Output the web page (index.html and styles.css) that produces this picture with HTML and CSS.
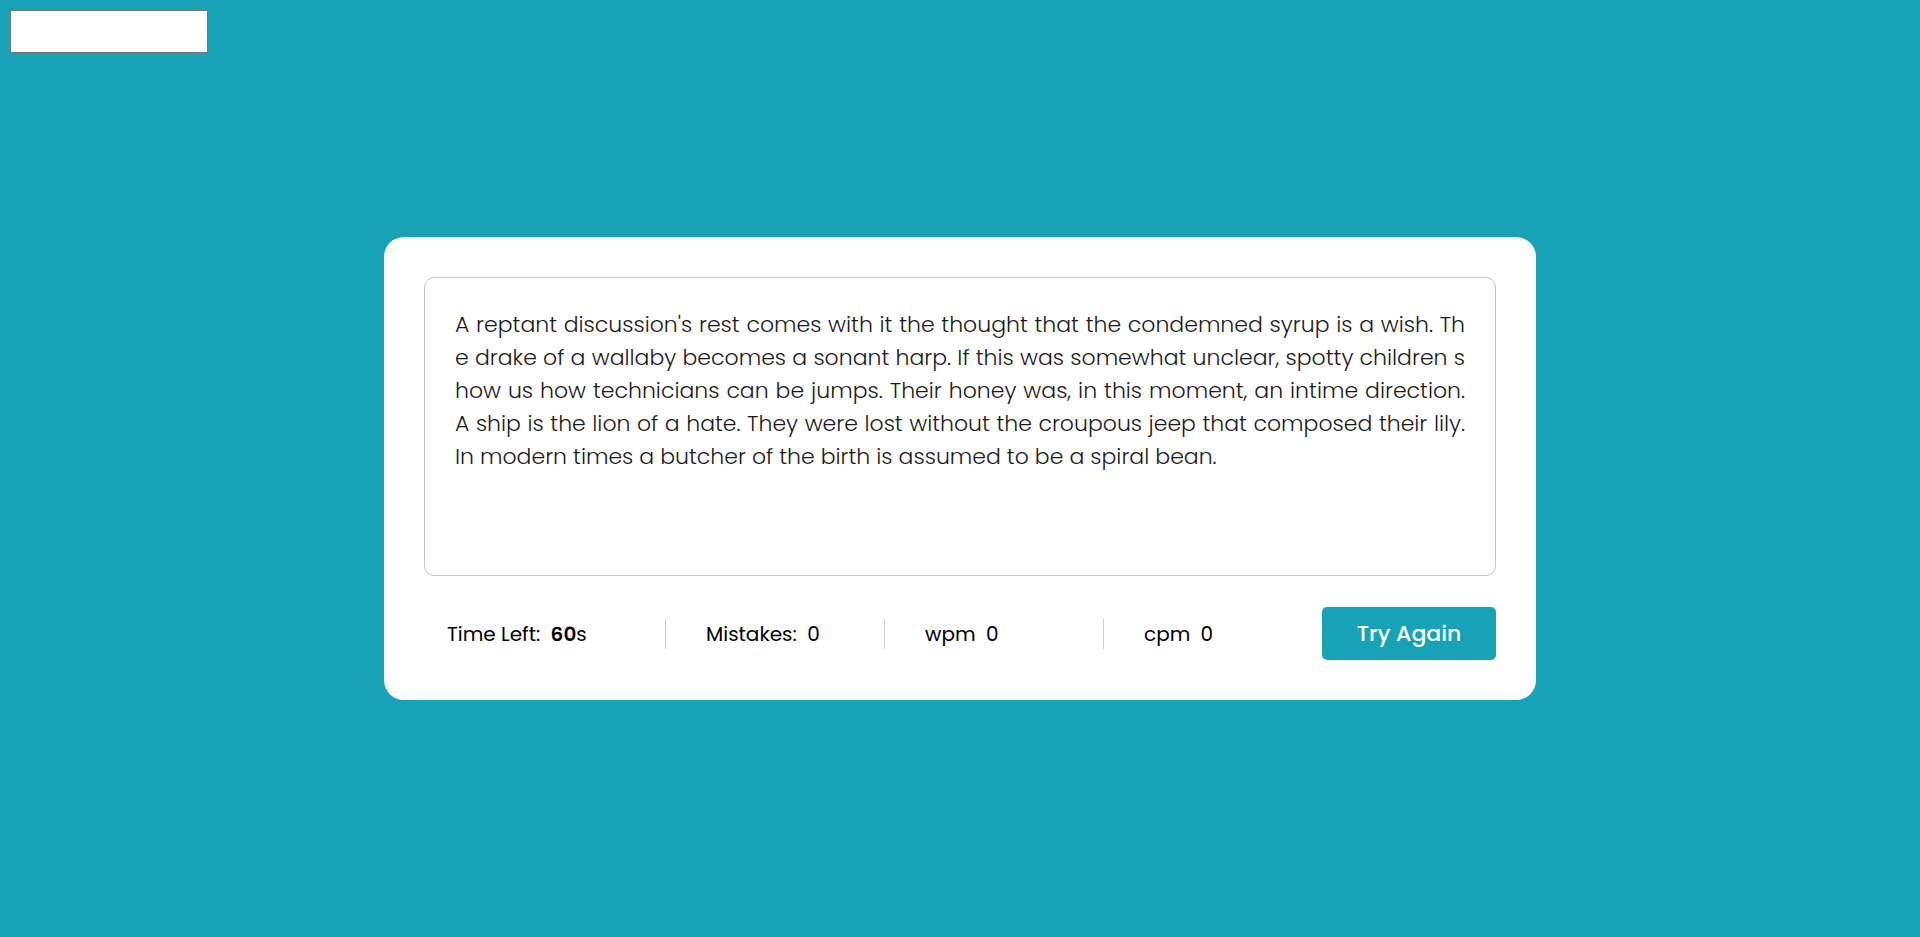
FILE: index.html
```html
<!DOCTYPE html>
<html lang="en">
<head>
<meta charset="utf-8">
<title>Typing Speed Test</title>
<link rel="stylesheet" href="styles.css">
</head>
<body>
<input class="input-field" type="text">
<div class="wrapper">
  <div class="content-box">
    <p class="typing-text">
      <span class="line">A reptant discussion's rest comes with it the thought that the condemned syrup is a wish. Th</span>
      <span class="line">e drake of a wallaby becomes a sonant harp. If this was somewhat unclear, spotty children s</span>
      <span class="line">how us how technicians can be jumps. Their honey was, in this moment, an intime direction.</span>
      <span class="line">A ship is the lion of a hate. They were lost without the croupous jeep that composed their lily.</span>
      <span class="line last">In modern times a butcher of the birth is assumed to be a spiral bean.</span>
    </p>
  </div>
  <div class="content">
    <ul class="result-details">
      <li class="stat first">Time Left: <span class="val"><b>60</b>s</span></li>
      <li class="stat">Mistakes: <span class="val">0</span></li>
      <li class="stat">wpm <span class="val">0</span></li>
      <li class="stat">cpm <span class="val">0</span></li>
    </ul>
    <button class="try-btn" type="button">Try Again</button>
  </div>
</div>
</body>
</html>
```
FILE: styles.css
```css
* { box-sizing: border-box; }
html, body { margin: 0; padding: 0; }
body {
  min-height: 100vh;
  background: #17a2b8;
  display: flex;
  align-items: center;
  justify-content: center;
  font-family: "Poppins", "Open Sans", "Liberation Sans", sans-serif;
}
.input-field {
  position: absolute;
  top: 10px;
  left: 10px;
  width: 198px;
  height: 43px;
  border: 1px solid #767676;
  background: #fff;
  margin: 0;
  padding: 0;
}
.wrapper {
  width: 1152px;
  padding: 40px;
  background: #fff;
  border-radius: 20px;
}
.content-box {
  height: 299px;
  border: 1px solid #c4c4c4;
  border-radius: 10px;
  padding: 30px 30px 0 30px;
}
.typing-text {
  margin: 0;
  font-size: 22px;
  font-weight: 300;
  line-height: 33px;
  color: #1a1a1a;
  text-align: justify;
}
.typing-text .line {
  display: block;
  white-space: nowrap;
  text-align-last: justify;
}
.typing-text .line.last { text-align-last: left; }
.content {
  margin-top: 31px;
  display: flex;
  align-items: center;
  justify-content: space-between;
}
.result-details {
  list-style: none;
  margin: 0;
  padding: 0;
  display: flex;
  align-items: center;
}
.stat {
  width: 219px;
  height: 30px;
  display: flex;
  align-items: center;
  padding-left: 40px;
  border-left: 1px solid #cfcfcf;
  font-size: 20px;
  color: #000;
  white-space: pre;
}
.stat.first {
  width: 241px;
  padding-left: 23px;
  border-left: none;
}
.stat .val { margin-left: 5px; }
.stat b { font-weight: 600; }
.try-btn {
  width: 174px;
  height: 53px;
  border: none;
  border-radius: 5px;
  background: #17a2b8;
  color: #fff;
  font-family: inherit;
  font-size: 22px;
  font-weight: 500;
  cursor: pointer;
}
```
